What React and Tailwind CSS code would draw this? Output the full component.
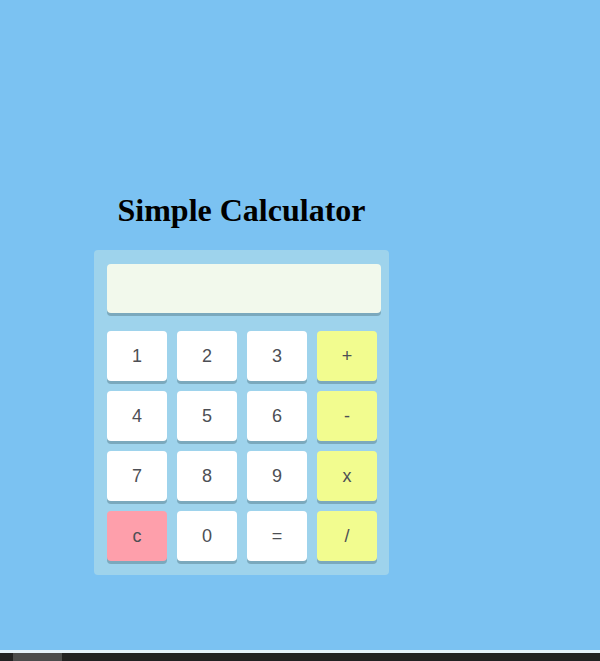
import React, { useState } from 'react';

const keys = [
  { k: '1' }, { k: '2' }, { k: '3' }, { k: '+', op: true },
  { k: '4' }, { k: '5' }, { k: '6' }, { k: '-', op: true },
  { k: '7' }, { k: '8' }, { k: '9' }, { k: 'x', op: true },
  { k: 'c', clear: true }, { k: '0' }, { k: '=' }, { k: '/', op: true },
];

const App = () => {
  const [display, setDisplay] = useState('');

  const press = (k) => {
    if (k === 'c') return setDisplay('');
    if (k === '=') {
      try {
        setDisplay(String(Function(`return (${display.replace(/x/g, '*')})`)()));
      } catch {
        setDisplay('Error');
      }
      return;
    }
    setDisplay(display + k);
  };

  return (
    <div className="h-[661px] flex flex-col overflow-hidden">
      <div className="h-[650px] bg-[#7bc2f2] pt-[192px] pl-[94px]">
        <div className="w-[295px]">
          <h1 className="text-center text-[32px] leading-[37px] font-bold text-black mb-[21px] font-['Liberation_Serif',serif]">
            Simple Calculator
          </h1>

          {/* calculator panel */}
          <div className="bg-[#9ed3ec] rounded-[4px] pt-[14px] pl-[13px] pr-[8px] pb-[14px]">
            <div className="w-[274px] h-[49px] bg-[#f2f9ec] rounded-[4px] shadow-[0_3px_0_#7ba9bd] mb-[18px] px-3 flex items-center justify-end text-[22px] text-[#444] font-['Liberation_Sans',sans-serif]">
              {display}
            </div>

            <div className="grid grid-cols-[repeat(4,60px)] gap-[10px]">
              {keys.map(({ k, op, clear }) => (
                <button
                  key={k}
                  onClick={() => press(k)}
                  className={`h-[50px] rounded-[4px] shadow-[0_3px_0_#7ba9bd] text-[18px] text-[#4d4f55] font-['Liberation_Sans',sans-serif] flex items-center justify-center ${
                    clear ? 'bg-[#fe9fab]' : op ? 'bg-[#f2fc8f]' : 'bg-white'
                  }`}
                >
                  {k}
                </button>
              ))}
            </div>
          </div>
        </div>
      </div>

      {/* bottom scrollbar strip */}
      <div className="h-[3px] bg-[#e6f3fb]" />
      <div className="flex-1 bg-[#222] pl-[13px]">
        <div className="w-[49px] h-full bg-[#4c4c4c]" />
      </div>
    </div>
  );
};

export default App;
